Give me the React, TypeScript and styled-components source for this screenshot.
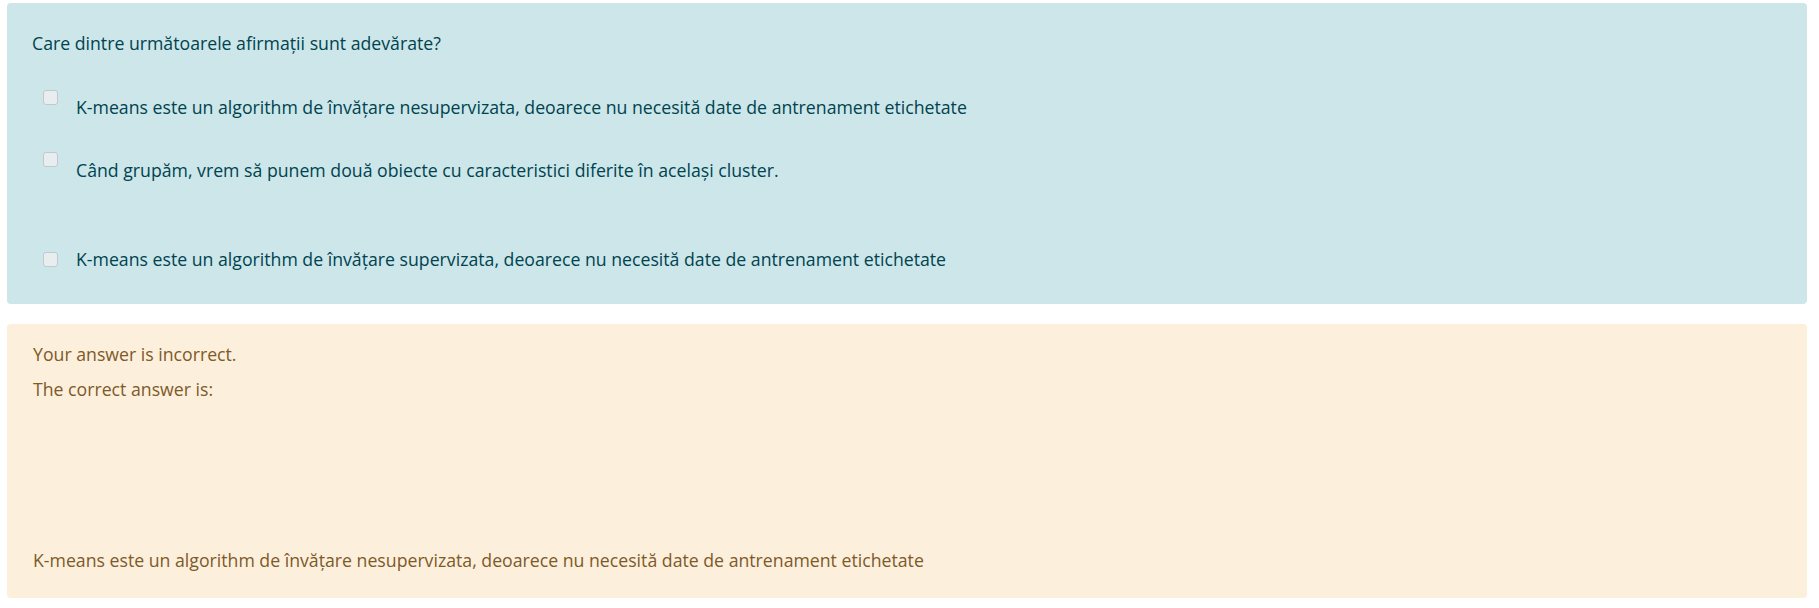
import React from 'react';
import styled, { createGlobalStyle } from 'styled-components';

const GlobalStyle = createGlobalStyle`
  html, body {
    margin: 0;
    padding: 0;
    background: #ffffff;
  }
  body {
    font-family: "Open Sans", "Noto Sans", sans-serif;
    font-size: 17.7px;
    line-height: 1.5;
  }
`;

const Page = styled.div`
  padding: 3px 12px 10px 7px;
  display: flex;
  flex-direction: column;
  gap: 20px;
`;

const Formulation = styled.div`
  background-color: #cce6ea;
  color: #00434e;
  border-radius: 4px;
  padding: 26.9px 25px 30px 25px;
  height: 300.5px;
  box-sizing: border-box;
`;

const QuestionText = styled.div`
  margin-bottom: 33.5px;
`;

const Answers = styled.div`
  display: flex;
  flex-direction: column;
  padding-left: 11px;
`;

const Option = styled.div<{ $after: number }>`
  display: flex;
  align-items: flex-start;
  margin-bottom: ${({ $after }) => $after}px;
`;

const Box = styled.input.attrs({ type: 'checkbox' })<{ $drop: number }>`
  appearance: none;
  -webkit-appearance: none;
  width: 15px;
  height: 15px;
  margin: ${({ $drop }) => $drop}px 18px 0 0;
  flex-shrink: 0;
  border: 1px solid #c2c9cc;
  border-radius: 3px;
  background-color: #e8eef0;
  box-sizing: border-box;
`;

const Label = styled.label<{ $drop: number }>`
  padding-top: ${({ $drop }) => $drop}px;
`;

const Outcome = styled.div`
  background-color: #fcefdc;
  color: #7d5a29;
  border-radius: 4px;
  padding: 17px 25px 20px 26px;
  height: 274px;
  box-sizing: border-box;
`;

const Feedback = styled.div<{ $after: number }>`
  margin-bottom: ${({ $after }) => $after}px;
`;

const options = [
  {
    text: 'K-means este un algorithm de învățare nesupervizata, deoarece nu necesită date de antrenament etichetate',
    box: 0,
    label: 3.9,
    after: 31.5,
  },
  {
    text: 'Când grupăm, vrem să punem două obiecte cu caracteristici diferite în același cluster.',
    box: 0,
    label: 4.9,
    after: 62.4,
  },
  {
    text: 'K-means este un algorithm de învățare supervizata, deoarece nu necesită date de antrenament etichetate',
    box: 6.1,
    label: 0,
    after: 0,
  },
];

const App: React.FC = () => {
  return (
    <>
      <GlobalStyle />
      <Page>
        <Formulation>
          <QuestionText>Care dintre următoarele afirmații sunt adevărate?</QuestionText>
          <Answers>
            {options.map((o, i) => (
              <Option key={i} $after={o.after}>
                <Box id={`ans${i}`} $drop={o.box} />
                <Label htmlFor={`ans${i}`} $drop={o.label}>
                  {o.text}
                </Label>
              </Option>
            ))}
          </Answers>
        </Formulation>
        <Outcome>
          <Feedback $after={8.5}>Your answer is incorrect.</Feedback>
          <Feedback $after={144.5}>The correct answer is:</Feedback>
          <Feedback $after={0}>
            K-means este un algorithm de învățare nesupervizata, deoarece nu necesită date de antrenament etichetate
          </Feedback>
        </Outcome>
      </Page>
    </>
  );
};

export default App;
